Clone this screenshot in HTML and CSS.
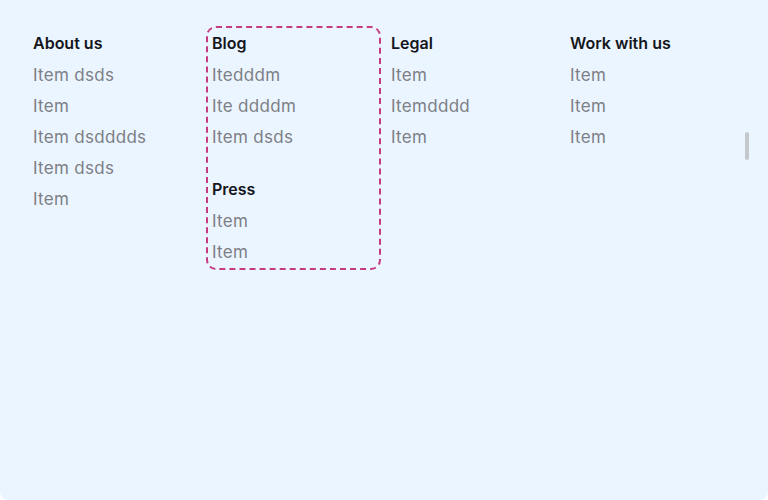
FILE: index.html
```html
<!DOCTYPE html>
<html>
<head>
<meta charset="utf-8">
<link rel="stylesheet" href="styles.css">
</head>
<body>
<div class="page">
  <div class="grid">
    <div class="col">
      <div class="head">About us</div>
      <div class="item">Item dsds</div>
      <div class="item">Item</div>
      <div class="item">Item dsdddds</div>
      <div class="item">Item dsds</div>
      <div class="item">Item</div>
    </div>
    <div class="col boxed">
      <div class="head">Blog</div>
      <div class="item">Itedddm</div>
      <div class="item">Ite ddddm</div>
      <div class="item">Item dsds</div>
      <div class="head spaced">Press</div>
      <div class="item">Item</div>
      <div class="item">Item</div>
    </div>
    <div class="col">
      <div class="head">Legal</div>
      <div class="item">Item</div>
      <div class="item">Itemdddd</div>
      <div class="item">Item</div>
    </div>
    <div class="col">
      <div class="head">Work with us</div>
      <div class="item">Item</div>
      <div class="item">Item</div>
      <div class="item">Item</div>
    </div>
  </div>
  <div class="thumb"></div>
</div>
</body>
</html>
```
FILE: styles.css
```css
html, body {
  margin: 0;
  padding: 0;
}
body {
  background: #ffffff;
  font-family: Inter, "Open Sans", sans-serif;
}
.page {
  position: relative;
  width: 768px;
  height: 500px;
  background: #ebf5ff;
  border-radius: 0 0 8px 8px;
  box-sizing: border-box;
  padding: 26px 0 0 27px;
}
.grid {
  display: grid;
  grid-template-columns: 179px 179px 179px 179px;
  align-items: start;
}
.col {
  padding: 2px 6px 0 6px;
  line-height: 31px;
}
.boxed {
  width: 175px;
  box-sizing: border-box;
  border: 2px dashed #c53a80;
  border-radius: 10px;
  padding: 0 4px 0 4px;
}
.head {
  font-size: 16px;
  font-weight: 600;
  color: #14161c;
  margin-bottom: 1px;
}
.spaced {
  margin-top: 21px;
}
.item {
  font-size: 17px;
  letter-spacing: 0.3px;
  color: #7d7f86;
}
.thumb {
  position: absolute;
  left: 745px;
  top: 132px;
  width: 4px;
  height: 28px;
  border-radius: 2px;
  background: #c4c7cc;
}
```
